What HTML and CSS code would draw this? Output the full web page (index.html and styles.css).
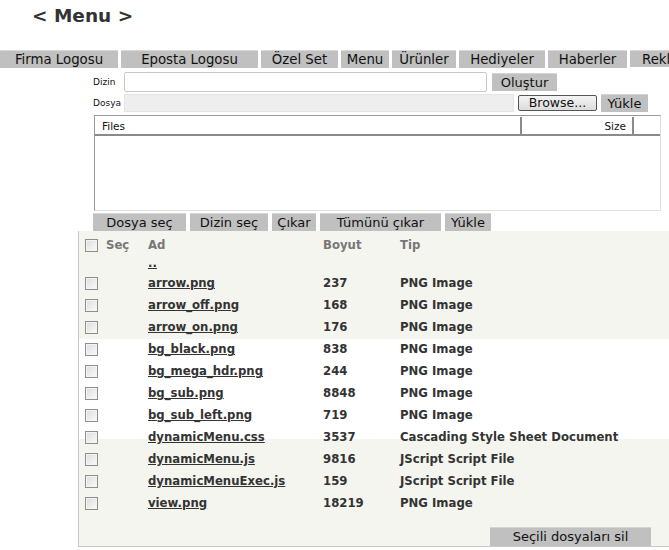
FILE: index.html
```html
<!DOCTYPE html>
<html>
<head>
<meta charset="utf-8">
<link rel="stylesheet" href="styles.css">
</head>
<body>
<div class="page">
  <h1 class="title">&lt; Menu &gt;</h1>
  <nav class="tabs">
    <span class="tab t1">Firma Logosu</span>
    <span class="tab t2">Eposta Logosu</span>
    <span class="tab t3">Özel Set</span>
    <span class="tab t4">Menu</span>
    <span class="tab t5">Ürünler</span>
    <span class="tab t6">Hediyeler</span>
    <span class="tab t7">Haberler</span>
    <span class="tab t8">Rekl</span>
  </nav>
  <div class="form">
    <div class="row r1">
      <label class="lbl">Dizin</label>
      <span class="input in1"></span>
      <span class="btn b-olustur">Oluştur</span>
    </div>
    <div class="row r2">
      <label class="lbl">Dosya</label>
      <span class="input in2"></span>
      <span class="browse">Browse...</span>
      <span class="btn b-yukle">Yükle</span>
    </div>
    <div class="files">
      <div class="fhead">
        <span class="fc f-name">Files</span>
        <span class="fc f-size">Size</span>
        <span class="fc f-end"></span>
      </div>
    </div>
    <div class="actions">
      <span class="btn a1">Dosya seç</span>
      <span class="btn a2">Dizin seç</span>
      <span class="btn a3">Çıkar</span>
      <span class="btn a4">Tümünü çıkar</span>
      <span class="btn a5">Yükle</span>
    </div>
  </div>
  <div class="panel">
    <div class="grid head">
      <span class="cb"></span><span>Seç</span><span>Ad</span><span>Boyut</span><span>Tip</span>
    </div>
    <div class="grid up"><span></span><span></span><a class="lnk">..</a><span></span><span></span></div>
    <div class="grid item"><span class="cb"></span><span></span><a class="lnk">arrow.png</a><span>237</span><span>PNG Image</span></div>
    <div class="grid item"><span class="cb"></span><span></span><a class="lnk">arrow_off.png</a><span>168</span><span>PNG Image</span></div>
    <div class="grid item"><span class="cb"></span><span></span><a class="lnk">arrow_on.png</a><span>176</span><span>PNG Image</span></div>
    <div class="grid item"><span class="cb"></span><span></span><a class="lnk">bg_black.png</a><span>838</span><span>PNG Image</span></div>
    <div class="grid item"><span class="cb"></span><span></span><a class="lnk">bg_mega_hdr.png</a><span>244</span><span>PNG Image</span></div>
    <div class="grid item"><span class="cb"></span><span></span><a class="lnk">bg_sub.png</a><span>8848</span><span>PNG Image</span></div>
    <div class="grid item"><span class="cb"></span><span></span><a class="lnk">bg_sub_left.png</a><span>719</span><span>PNG Image</span></div>
    <div class="grid item"><span class="cb"></span><span></span><a class="lnk">dynamicMenu.css</a><span>3537</span><span>Cascading Style Sheet Document</span></div>
    <div class="grid item"><span class="cb"></span><span></span><a class="lnk">dynamicMenu.js</a><span>9816</span><span>JScript Script File</span></div>
    <div class="grid item"><span class="cb"></span><span></span><a class="lnk">dynamicMenuExec.js</a><span>159</span><span>JScript Script File</span></div>
    <div class="grid item"><span class="cb"></span><span></span><a class="lnk">view.png</a><span>18219</span><span>PNG Image</span></div>
    <div class="footer"><span class="btn del">Seçili dosyaları sil</span></div>
  </div>
</div>
</body>
</html>
```
FILE: styles.css
```css
html, body {
  margin: 0;
  padding: 0;
  background: #fff;
  overflow: hidden;
}
.page {
  width: 669px;
  height: 550px;
  overflow: hidden;
  font-family: "DejaVu Sans", Verdana, sans-serif;
  color: #333;
}
.title {
  margin: 0 0 0 32px;
  padding-top: 4px;
  font-size: 18.5px;
  font-weight: bold;
  line-height: 24px;
  height: 50px;
  box-sizing: border-box;
  color: #333;
}
.tabs {
  display: flex;
  gap: 3px;
  height: 18px;
  white-space: nowrap;
}
.tab {
  flex: none;
  background: #c0c0c0;
  border-top: 1px solid #d8d8d8;
  height: 17px;
  line-height: 17px;
  font-size: 13.3px;
  color: #111;
  text-align: center;
  overflow: hidden;
}
.t1 { width: 118px; }
.t2 { width: 137px; }
.t3 { width: 77px; }
.t4 { width: 48px; }
.t5 { width: 64px; }
.t6 { width: 86px; }
.t7 { width: 79px; }
.t8 { width: 39px; text-align: left; padding-left: 12px; box-sizing: border-box; }

.form {
  margin-left: 93px;
  padding-top: 4px;
}
.row {
  display: flex;
  align-items: center;
}
.r1 { height: 20px; }
.r2 { height: 18px; margin-top: 2px; }
.lbl {
  width: 31px;
  font-size: 9px;
  color: #111;
  font-family: "DejaVu Sans", Tahoma, sans-serif;
}
.input {
  display: block;
  box-sizing: border-box;
}
.in1 {
  width: 363px;
  height: 20px;
  border: 1px solid #c8c8c8;
  border-radius: 2px;
  background: #fff;
  margin-right: 5px;
}
.in2 {
  width: 390px;
  height: 18px;
  background: #eeeeee;
  border: 1px solid #e4e4e4;
  margin-right: 4px;
}
.btn {
  display: block;
  background: #c0c0c0;
  border-top: 1px solid #d4d4d4;
  height: 17px;
  line-height: 17px;
  font-size: 13px;
  color: #111;
  text-align: center;
  white-space: nowrap;
  box-sizing: content-box;
}
.b-olustur { width: 65px; }
.browse {
  box-sizing: border-box;
  width: 79px;
  height: 16px;
  line-height: 14px;
  border: 1px solid #555;
  border-radius: 2px;
  background: linear-gradient(#f4f4f4, #dcdcdc);
  font-size: 12.5px;
  color: #111;
  text-align: center;
  margin-right: 4px;
}
.b-yukle { width: 47px; }

.files {
  margin: 3px 0 0 1px;
  width: 567px;
  height: 96px;
  box-sizing: border-box;
  border: 1px solid #9a9a9a;
  border-right-color: #e0e0e0;
  border-bottom-color: #e0e0e0;
  background: #fff;
  padding-top: 1px;
}
.fhead {
  display: flex;
  height: 19px;
  border-bottom: 2px solid #8a8a8a;
  box-sizing: border-box;
  font-family: "DejaVu Sans", Tahoma, sans-serif;
  font-size: 10.5px;
  color: #111;
}
.fc {
  box-sizing: border-box;
  height: 17px;
  line-height: 18px;
  border-right: 2px solid #8a8a8a;
  border-left: 1px solid #fff;
}
.f-name { width: 427px; padding-left: 6px; }
.f-size { width: 112px; text-align: right; padding-right: 6px; }
.f-end { flex: 1; border-right: none; }

.actions {
  display: flex;
  gap: 4px;
  margin-top: 2px;
  height: 18px;
}
.a1 { width: 93px; }
.a2 { width: 78px; }
.a3 { width: 44px; }
.a4 { width: 121px; }
.a5 { width: 46px; }

.panel {
  margin-left: 78px;
  width: 620px;
  height: 316px;
  box-sizing: border-box;
  border-left: 1px solid #c8c8c8;
  border-bottom: 1px solid #c8c8c8;
  background: linear-gradient(#f5f5ef 0, #f5f5ef 108px, #fff 108px, #fff 208px, #f5f5ef 208px);
  padding: 4px 0 0 6px;
}
.grid {
  display: grid;
  grid-template-columns: 21px 42px 175px 77px 1fr;
  align-items: center;
  font-size: 11.7px;
  font-weight: bold;
  color: #333;
  white-space: nowrap;
}
.head {
  height: 18px;
  color: #777;
  padding-top: 1px;
}
.up { height: 18px; }
.item { height: 22px; }
.lnk {
  color: #333;
  text-decoration: underline;
}
.cb {
  display: block;
  width: 13px;
  height: 13px;
  box-sizing: border-box;
  border: 1px solid #8e8e8e;
  background: linear-gradient(135deg, #dcdcdc, #fbfbfb);
  box-shadow: inset 0 0 0 1px #f4f4f4;
}
.footer {
  display: flex;
  padding: 13px 0 0 405px;
}
.del {
  width: 161px;
  border-top: 1px solid #d4d4d4;
  height: 18px;
  line-height: 18px;
}
```
